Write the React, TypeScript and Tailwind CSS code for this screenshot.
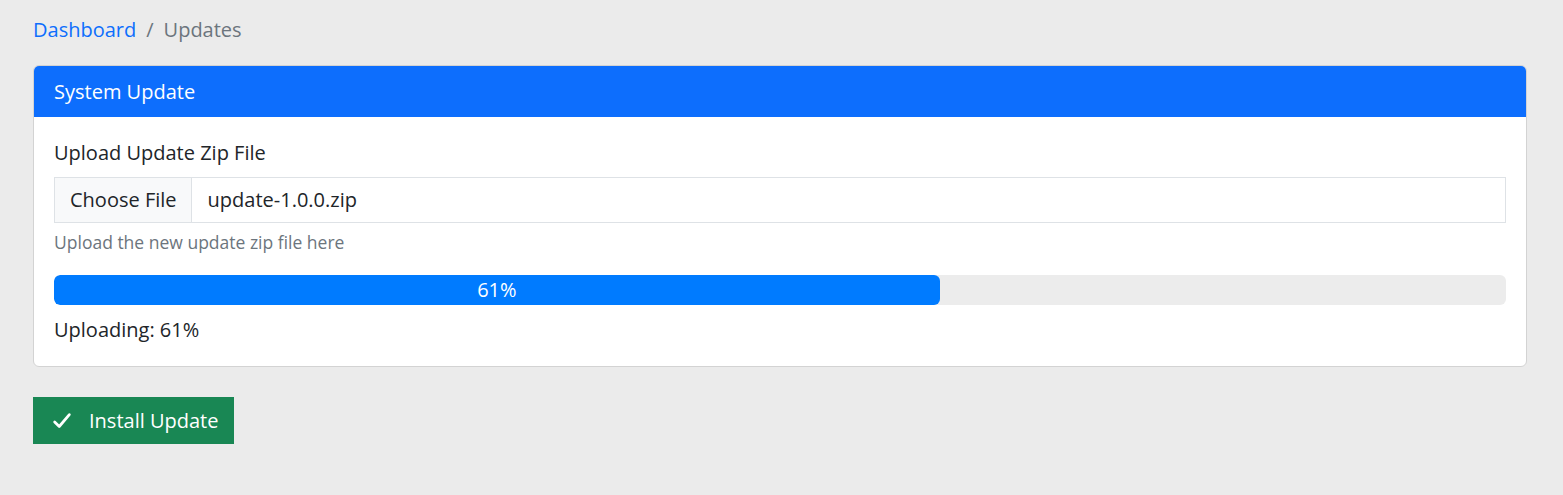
import React from "react";

export default function App() {
  return (
    <div className="min-h-[495px] w-full bg-[#ebebeb] pl-[33px] pr-[36px] pt-[16px] text-[#212529]" style={{ fontFamily: '"Open Sans", sans-serif' }}>
      <nav className="flex items-center text-[20px] leading-[28px]">
        <span className="text-[#0d6efd]">Dashboard</span>
        <span className="mx-[10px] text-[#6c757d]">/</span>
        <span className="text-[#6c757d]">Updates</span>
      </nav>
      <div className="mt-[21px] overflow-hidden rounded-[6px] border border-[#d3d3d3] bg-white">
        <div className="flex h-[51px] items-center bg-[#0d6efd] px-[20px] text-[20px] text-white">System Update</div>
        <div className="px-[20px] pt-[22px] pb-[22px]">
          <div className="text-[20px] leading-[28px]">Upload Update Zip File</div>
          <div className="mt-[10px] flex h-[46px] border border-[#dee2e6] text-[20px]">
            <div className="flex items-center border-r border-[#dee2e6] bg-[#f8f9fa] pl-[15px] pr-[14px]">Choose File</div>
            <div className="flex items-center px-[16px]">update-1.0.0.zip</div>
          </div>
          <div className="mt-[7px] text-[17.5px] leading-[24px] text-[#6c757d]">Upload the new update zip file here</div>
          <div className="mt-[21px] flex h-[30px] overflow-hidden rounded-[6px] bg-[#ececec]">
            <div className="flex items-center justify-center rounded-[6px] bg-[#007bff] text-[20px] text-white" style={{ width: "61%" }}>61%</div>
          </div>
          <div className="mt-[11px] text-[20px] leading-[28px]">Uploading: 61%</div>
        </div>
      </div>
      <button className="mt-[30px] flex h-[47px] w-[201px] items-center bg-[#198754] pl-[18px] text-[20px] text-white">
        <svg width="22" height="22" viewBox="0 0 24 24" fill="none" stroke="white" strokeWidth="3" strokeLinecap="round" strokeLinejoin="round">
          <path d="M4 13l5 5L20 5" />
        </svg>
        <span className="ml-[16px]">Install Update</span>
      </button>
    </div>
  );
}
